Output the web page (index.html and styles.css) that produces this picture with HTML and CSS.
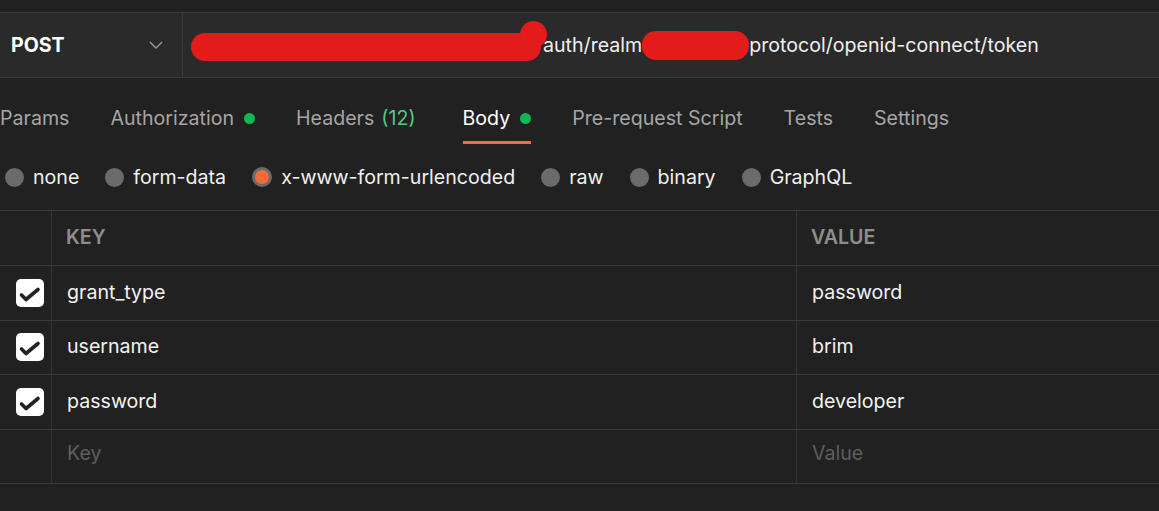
FILE: index.html
```html
<!DOCTYPE html>
<html>
<head>
<meta charset="utf-8">
<link rel="stylesheet" href="styles.css">
</head>
<body>
<div class="topgap"></div>
<div class="urlbar">
  <div class="method">
    <span class="method-name">POST</span>
    <svg class="chev" width="14" height="8" viewBox="0 0 14 8"><path d="M1 1 L7 7 L13 1" fill="none" stroke="#9b9b9b" stroke-width="1.4"/></svg>
  </div>
  <div class="url">
    <span class="redact r1"></span><span class="seg">auth/realm</span><span class="redact r2"></span><span class="seg">protocol/openid-connect/token</span>
  </div>
</div>

<nav class="tabs">
  <div class="tab">Params</div>
  <div class="tab">Authorization<span class="dot"></span></div>
  <div class="tab headers">Headers<span class="count">(12)</span></div>
  <div class="tab active">Body<span class="dot"></span></div>
  <div class="tab">Pre-request Script</div>
  <div class="tab">Tests</div>
  <div class="tab">Settings</div>
</nav>

<div class="radios">
  <label class="radio"><span class="circle"></span>none</label>
  <label class="radio"><span class="circle"></span>form-data</label>
  <label class="radio"><span class="circle selected"></span>x-www-form-urlencoded</label>
  <label class="radio"><span class="circle"></span>raw</label>
  <label class="radio"><span class="circle"></span>binary</label>
  <label class="radio"><span class="circle"></span>GraphQL</label>
</div>

<div class="table">
  <div class="row head">
    <div class="cell chk"></div>
    <div class="cell key">KEY</div>
    <div class="cell val">VALUE</div>
  </div>
  <div class="row">
    <div class="cell chk"><span class="box"><svg width="28" height="28" viewBox="0 0 28 28"><path d="M5.5 16 L10 20.5 L22 10.5" fill="none" stroke="#222" stroke-width="3.6" stroke-linecap="round" stroke-linejoin="round"/></svg></span></div>
    <div class="cell key">grant_type</div>
    <div class="cell val">password</div>
  </div>
  <div class="row">
    <div class="cell chk"><span class="box"><svg width="28" height="28" viewBox="0 0 28 28"><path d="M5.5 16 L10 20.5 L22 10.5" fill="none" stroke="#222" stroke-width="3.6" stroke-linecap="round" stroke-linejoin="round"/></svg></span></div>
    <div class="cell key">username</div>
    <div class="cell val">brim</div>
  </div>
  <div class="row">
    <div class="cell chk"><span class="box"><svg width="28" height="28" viewBox="0 0 28 28"><path d="M5.5 16 L10 20.5 L22 10.5" fill="none" stroke="#222" stroke-width="3.6" stroke-linecap="round" stroke-linejoin="round"/></svg></span></div>
    <div class="cell key">password</div>
    <div class="cell val">developer</div>
  </div>
  <div class="row">
    <div class="cell chk"></div>
    <div class="cell key placeholder">Key</div>
    <div class="cell val placeholder">Value</div>
  </div>
</div>
</body>
</html>
```

FILE: styles.css
```css
html, body {
  margin: 0;
  padding: 0;
  background: #212121;
  font-family: Inter, "Noto Sans", sans-serif;
  font-size: 19.6px;
  color: #f2f2f2;
  overflow: hidden;
}

.topgap {
  height: 12px;
}

.urlbar {
  display: flex;
  height: 64px;
  background: #2a2a2a;
  border-top: 1px solid #3a3a3a;
  border-bottom: 1px solid #3a3a3a;
}

.method {
  width: 171px;
  padding-left: 11px;
  display: flex;
  align-items: center;
  border-right: 1px solid #3a3a3a;
  box-sizing: content-box;
}

.method-name {
  font-weight: 700;
  color: #ffffff;
  flex: 1;
}

.chev {
  margin-right: 19px;
}

.url {
  display: flex;
  align-items: center;
  padding-left: 8px;
  color: #f0f0f0;
  white-space: nowrap;
}

.redact {
  display: inline-block;
  background: #e31b1b;
  position: relative;
}

.r1 {
  width: 350px;
  height: 28px;
  border-radius: 14px;
  margin-top: 4px;
}

.r1::after {
  content: "";
  position: absolute;
  right: -6px;
  top: -12px;
  width: 27px;
  height: 27px;
  border-radius: 50%;
  background: #e31b1b;
}

.r1 + .seg {
  margin-left: 2px;
}

.r2 {
  width: 107px;
  height: 29px;
  border-radius: 14px;
}

.tabs {
  display: flex;
  gap: 41px;
  height: 66px;
}

.tab {
  display: flex;
  align-items: center;
  padding-top: 17px;
  border-bottom: 3px solid transparent;
  box-sizing: border-box;
  height: 66px;
  color: #a6a6a6;
  white-space: nowrap;
}

.tab.headers {
  margin-right: 6px;
}

.tab.active {
  color: #ffffff;
  border-bottom-color: #f26b3a;
}

.dot {
  width: 11px;
  height: 11px;
  border-radius: 50%;
  background: #0cb850;
  margin-left: 10px;
}

.count {
  color: #55c986;
  margin-left: 7px;
}

.radios {
  display: flex;
  align-items: center;
  gap: 26px;
  height: 66px;
  padding-left: 5px;
}

.radio {
  display: flex;
  align-items: center;
  gap: 9px;
  color: #f0f0f0;
}

.circle {
  width: 19px;
  height: 19px;
  border-radius: 50%;
  background: #6b6b6b;
  box-sizing: border-box;
}

.circle.selected {
  border: 3px solid #6b6b6b;
  background: #f26b3a;
  width: 20px;
  height: 20px;
}

.table {
  border-top: 1px solid #3a3a3a;
}

.row {
  display: grid;
  grid-template-columns: 52px 745px 1fr;
  height: 54.6px;
  border-bottom: 1px solid #3a3a3a;
  box-sizing: border-box;
}

.row.head {
  height: 55px;
}

.cell {
  display: flex;
  align-items: center;
  border-right: 1px solid #333333;
  color: #f2f2f2;
  padding-bottom: 2px;
}

.cell.val {
  border-right: none;
  padding-left: 15px;
}

.cell.key {
  padding-left: 15px;
}

.cell.chk {
  padding-left: 16px;
  padding-bottom: 0;
}

.head .cell {
  font-weight: 600;
  color: #8e8e8e;
}

.head .cell.key,
.head .cell.val {
  padding-left: 14px;
}

.cell.placeholder {
  color: #5e5e5e;
  padding-bottom: 7px;
}

.box {
  width: 28px;
  height: 28px;
  border-radius: 5px;
  background: #ffffff;
  display: flex;
  align-items: center;
  justify-content: center;
}
```
